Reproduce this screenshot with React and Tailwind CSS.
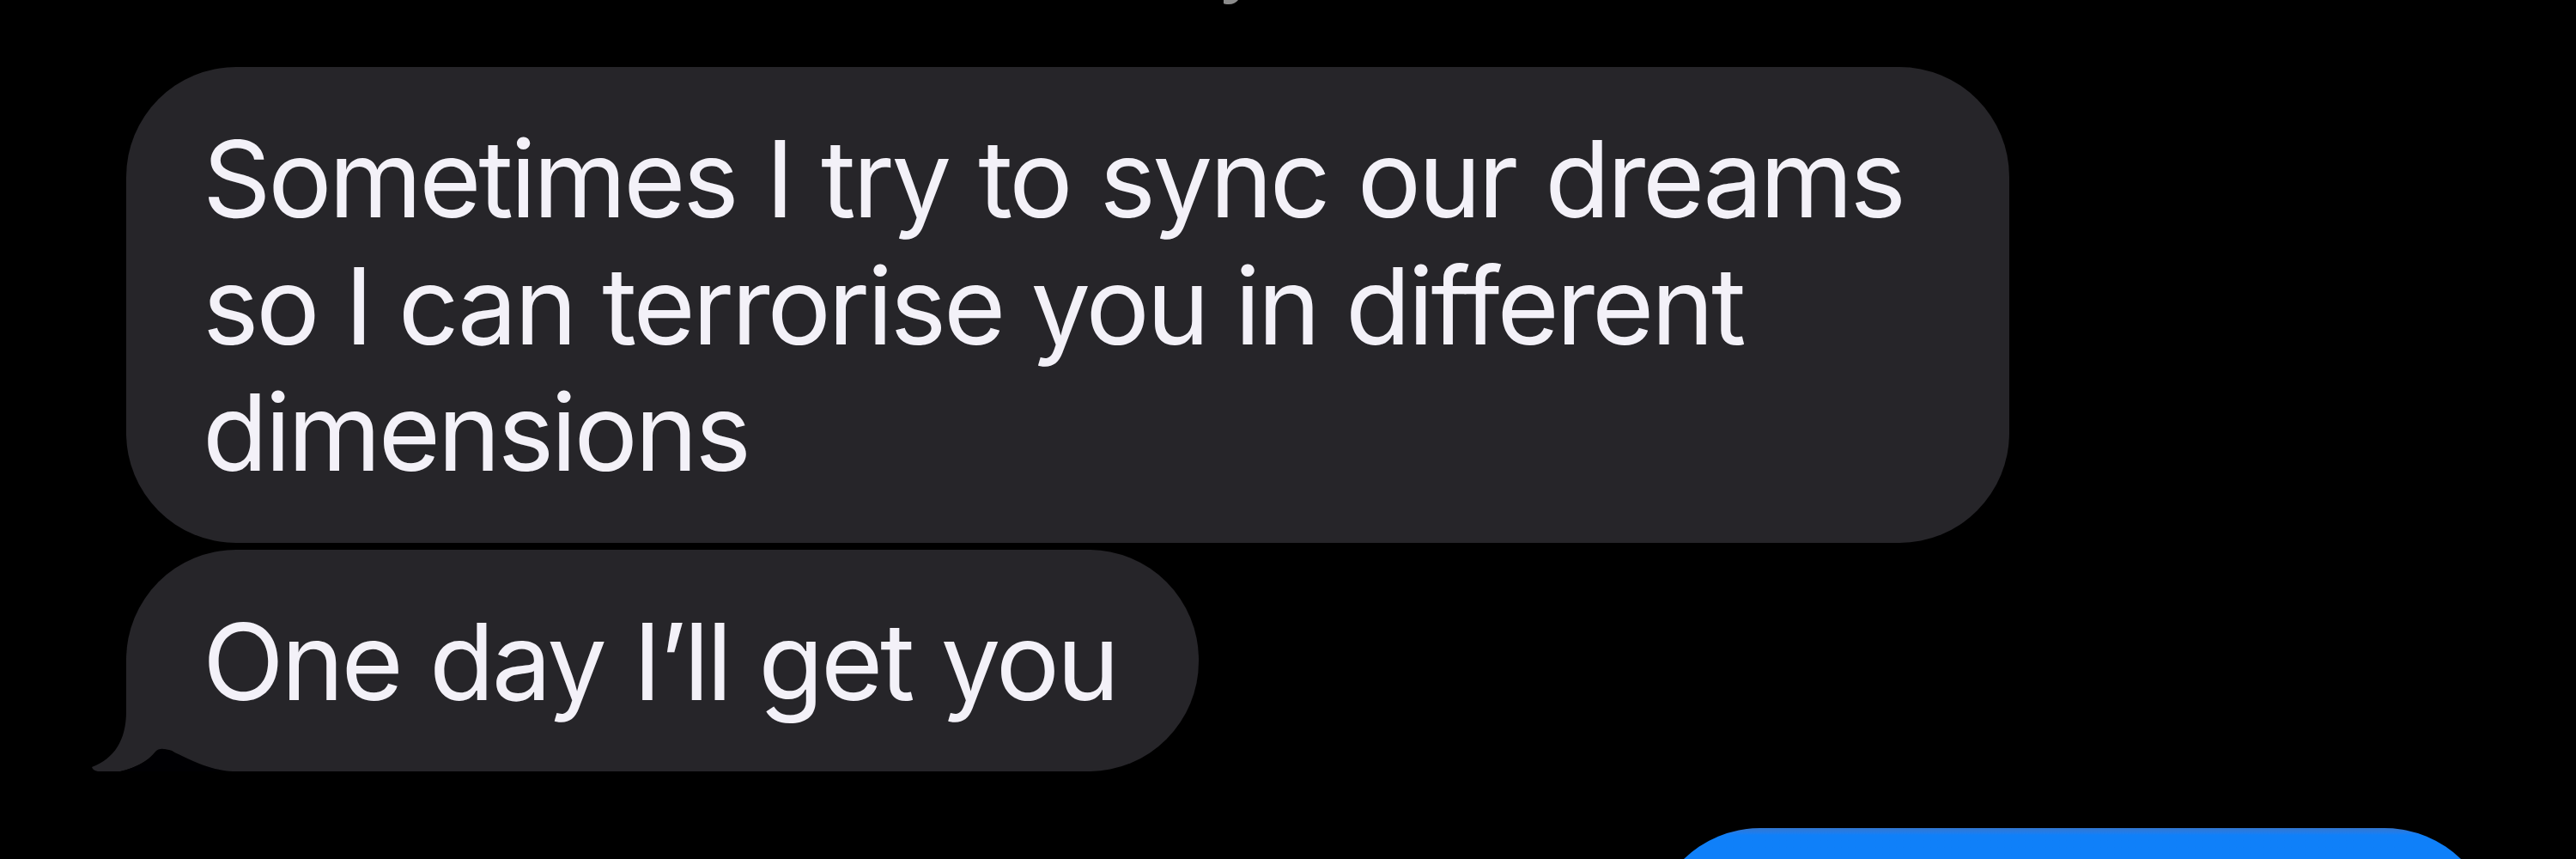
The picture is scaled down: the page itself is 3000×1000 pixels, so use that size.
import React from 'react';

const messages = [
    {
        id: 1,
        lines: [
            { text: 'Sometimes I try to sync our dreams', spacing: 'tracking-[-3.4px] [word-spacing:3px]' },
            { text: 'so I can terrorise you in different', spacing: 'tracking-[-3.2px] [word-spacing:0.5px]' },
            { text: 'dimensions', spacing: 'tracking-[-3.3px]' },
        ],
        box: 'h-[554px] w-[2193px] pt-[57px]',
    },
    {
        id: 2,
        lines: [{ text: 'One day I’ll get you', spacing: 'tracking-[-3.3px] [word-spacing:2px]' }],
        box: 'h-[258px] w-[1249px] pt-[57px]',
        tail: true,
    },
];

function Tail() {
    return (
        <svg className="absolute bottom-0 -left-[41px] h-[130px] w-[190px]" viewBox="0 0 190 130">
            <path d="M41 0 H190 V130 H157 C125 127 107 104 81 104 C72 114 53 126 34 130 H8 Q2 129 1 125 C27 115 41 94 41 60 Z" fill="#262529" />
            <path d="M34 130 C53 126 66 118 75 107 Q79 103 85 104 C107 109 125 127 165 130 Z" fill="#000003" />
        </svg>
    );
}

function Bubble({ lines, box, tail }) {
    return (
        <div className={`relative rounded-[128px] bg-[#262529] pl-[89px] ${box}`}>
            {tail && <Tail />}
            {lines.map((line) => (
                <p
                    key={line.text}
                    className={`relative whitespace-nowrap text-[124px] leading-[147.5px] text-[#f3f1f8] ${line.spacing}`}
                >
                    {line.text}
                </p>
            ))}
        </div>
    );
}

export default function App() {
    return (
        <main className="flex h-[1000px] w-[3000px] flex-col overflow-hidden bg-black font-['Inter',sans-serif]">
            <div className="flex h-[78px] shrink-0 pl-[1424px]">
                <svg className="h-2 w-5" viewBox="0 0 20 8">
                    <path d="M1 0 H18 Q14 5 7 5 Q2 5 1 4 Z" fill="#8b8b8b" />
                </svg>
            </div>
            <div className="flex shrink-0 flex-col items-start gap-2 pl-[147px]">
                {messages.map((msg) => (
                    <Bubble key={msg.id} {...msg} />
                ))}
            </div>
            <div className="mt-[66px] mr-[95px] h-[258px] w-[983px] shrink-0 self-end rounded-[128px] bg-linear-to-b from-[#3276cf] to-[#0f80f9] to-[8px]" />
        </main>
    );
}
